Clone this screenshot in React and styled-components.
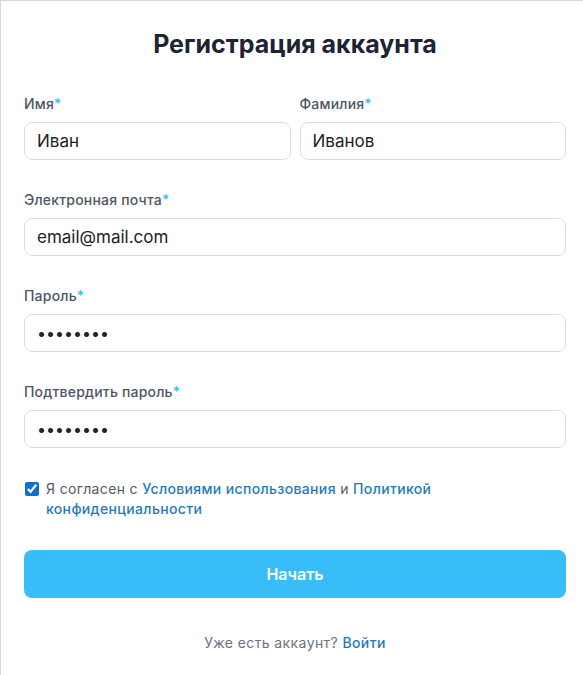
import React from "react";
import styled, { createGlobalStyle } from "styled-components";

const Global = createGlobalStyle`
  html, body { margin: 0; padding: 0; background: #fff; overflow: hidden; }
  body { font-family: Inter, "Noto Sans", sans-serif; }
  * { box-sizing: border-box; }
`;

const Card = styled.div`
  width: 591px;
  border: 1px solid #d9d9d9;
  background: #fff;
  padding: 27px 24px 24px 23px;
`;

const Title = styled.h1`
  margin: 0;
  text-align: center;
  font-size: 25px;
  line-height: 32px;
  font-weight: 700;
  color: #1e2433;
`;

const Form = styled.form`
  display: flex;
  flex-direction: column;
  margin-top: 34px;
`;

const Row = styled.div`
  display: grid;
  grid-template-columns: minmax(0, 1fr) minmax(0, 1fr);
  gap: 9px;
`;

const Field = styled.div`
  display: flex;
  flex-direction: column;
  min-width: 0;
  margin-bottom: 30px;
`;

const Label = styled.label`
  font-size: 14px;
  line-height: 20px;
  font-weight: 500;
  letter-spacing: 0.2px;
  color: #4e5562;
  margin-bottom: 8px;
`;

const Star = styled.span`
  color: #38bdf8;
`;

const Input = styled.input`
  width: 100%;
  min-width: 0;
  height: 38px;
  border: 1px solid #dcdde3;
  border-radius: 8px;
  padding: 0 12px;
  font-family: Inter, "Noto Sans", sans-serif;
  font-size: ${(p) => (p.type === "password" ? "16px" : "17px")};
  color: #222;
  background: #fff;
  outline: none;
`;

const Agree = styled.div`
  display: flex;
  align-items: flex-start;
  gap: 7px;
  margin-top: 1px;
`;

const Check = styled.input`
  width: 14px;
  height: 14px;
  margin: 3px 0 0 1px;
  accent-color: #0a6fd6;
  flex: none;
`;

const AgreeText = styled.span`
  font-size: 14px;
  line-height: 20px;
  letter-spacing: 0.35px;
  color: #555b66;
`;

const Link = styled.a`
  color: #1f7ab8;
  font-weight: 500;
  text-decoration: none;
`;

const Button = styled.button`
  margin-top: 31px;
  height: 48px;
  border: none;
  border-radius: 8px;
  background: #38bdf8;
  color: #fff;
  font-family: Inter, "Noto Sans", sans-serif;
  font-size: 16px;
  font-weight: 600;
`;

const Footer = styled.p`
  margin: 35px 0 0;
  text-align: center;
  font-size: 14px;
  line-height: 20px;
  letter-spacing: 0.4px;
  color: #6b7280;
`;

export default function App() {
  return (
    <>
      <Global />
      <Card>
        <Title>Регистрация аккаунта</Title>
        <Form onSubmit={(e) => e.preventDefault()}>
          <Row>
            <Field>
              <Label>
                Имя<Star>*</Star>
              </Label>
              <Input defaultValue="Иван" />
            </Field>
            <Field>
              <Label>
                Фамилия<Star>*</Star>
              </Label>
              <Input defaultValue="Иванов" />
            </Field>
          </Row>
          <Field>
            <Label>
              Электронная почта<Star>*</Star>
            </Label>
            <Input defaultValue="email@mail.com" />
          </Field>
          <Field>
            <Label>
              Пароль<Star>*</Star>
            </Label>
            <Input type="password" defaultValue="12345678" />
          </Field>
          <Field>
            <Label>
              Подтвердить пароль<Star>*</Star>
            </Label>
            <Input type="password" defaultValue="12345678" />
          </Field>
          <Agree>
            <Check type="checkbox" defaultChecked />
            <AgreeText>
              Я согласен с <Link href="#">Условиями использования</Link> и{" "}
              <Link href="#">Политикой конфиденциальности</Link>
            </AgreeText>
          </Agree>
          <Button type="submit">Начать</Button>
          <Footer>
            Уже есть аккаунт? <Link href="#">Войти</Link>
          </Footer>
        </Form>
      </Card>
    </>
  );
}
